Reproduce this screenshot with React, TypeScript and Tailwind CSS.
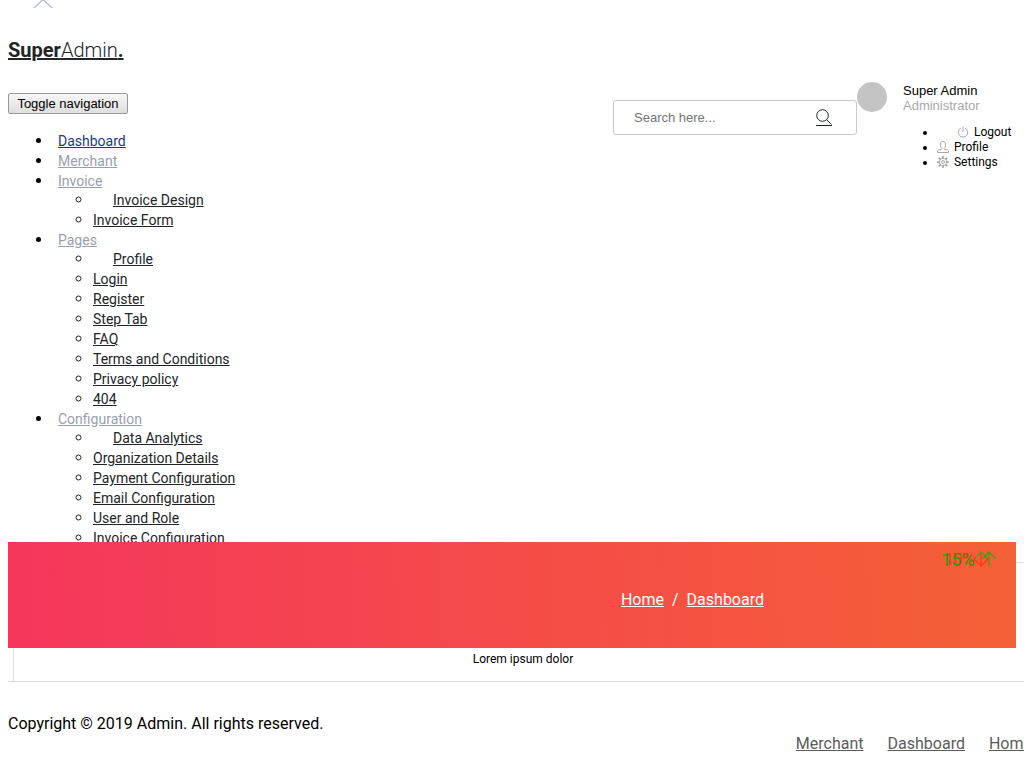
import type { ReactNode } from "react";

type MenuItem = {
  label: string;
  active?: boolean;
  children?: string[];
};

const menu: MenuItem[] = [
  { label: "Dashboard", active: true },
  { label: "Merchant" },
  { label: "Invoice", children: ["Invoice Design", "Invoice Form"] },
  {
    label: "Pages",
    children: [
      "Profile",
      "Login",
      "Register",
      "Step Tab",
      "FAQ",
      "Terms and Conditions",
      "Privacy policy",
      "404",
    ],
  },
  {
    label: "Configuration",
    children: [
      "Data Analytics",
      "Organization Details",
      "Payment Configuration",
      "Email Configuration",
      "User and Role",
      "Invoice Configuration",
    ],
  },
];

const footerLinks = ["Merchant", "Dashboard", "Home"];

function Icon({ className, children }: { className: string; children: ReactNode }) {
  return (
    <svg
      viewBox="0 0 24 24"
      fill="none"
      stroke="currentColor"
      strokeWidth="1.5"
      className={className}
      aria-hidden="true"
    >
      {children}
    </svg>
  );
}

function PowerIcon() {
  return (
    <Icon className="inline size-3 align-[-2px] text-[#8c8c8c]">
      <path d="M12 1v11M8 4a9.500 9.500 0 1 0 8 0" />
    </Icon>
  );
}

function UserIcon() {
  return (
    <Icon className="inline size-3 align-[-2px] text-[#8c8c8c]">
      <path d="M9.500 15C5 10 6 1 12 1s7 9 2.500 14c-1 3 7.500 2 8.500 5v3H1v-3c1-3 9.500-2 8.500-5z" />
    </Icon>
  );
}

function GearIcon() {
  return (
    <Icon className="inline size-3 align-[-2px] text-[#8c8c8c]">
      <circle cx="12" cy="12" r="3" />
      <circle cx="12" cy="12" r="7.500" />
      <path d="M12 0v4.500M12 19.500V24M0 12h4.500M19.500 12H24M3.500 3.500l3.200 3.200M17.300 17.300l3.200 3.200M3.500 20.500l3.200-3.200M17.300 6.700l3.200-3.200" strokeWidth="2.500" />
    </Icon>
  );
}

function SideNav() {
  return (
    <nav className="text-base leading-5">
      <ul className="list-disc pl-[45px]">
        {menu.map((item) => (
          <li key={item.label}>
            <a
              href="#"
              className={
                item.active
                  ? "pl-[5px] text-sm leading-none text-[#183b8c] underline"
                  : "pl-[5px] text-sm leading-none text-[#98a0af] underline"
              }
            >
              {item.label}
            </a>
            {item.children && (
              <ul className="-mt-px list-[circle] pl-10 text-[#212529]">
                {item.children.map((child) => (
                  <li key={child} className="first:[&>a]:pl-5">
                    <a href="#" className="text-sm leading-none underline">
                      {child}
                    </a>
                  </li>
                ))}
              </ul>
            )}
          </li>
        ))}
      </ul>
    </nav>
  );
}

function Search() {
  return (
    <form className="mt-[18px] flex h-[35px] w-[244px] items-center rounded-[3px] border border-[#c8c8c8] pr-6 pl-5">
      <input
        type="text"
        aria-label="Search"
        placeholder="Search here..."
        className="min-w-0 flex-1 font-['Liberation_Sans',sans-serif] text-[13px] outline-none placeholder:text-[#757575]"
      />
      <a href="#" aria-label="Search" className="border-b border-[#212529] text-[#212529]">
        <svg viewBox="0 0 16 16" fill="none" stroke="currentColor" className="block size-4">
          <circle cx="6.500" cy="6.500" r="5.800" />
          <path d="M10.600 10.600 15.500 15.500" />
        </svg>
      </a>
    </form>
  );
}

function Profile() {
  return (
    <div className="w-[167px]">
      <div className="flex gap-4">
        <div className="size-[30px] rounded-full bg-[#c4c4c4]" />
        <div className="pt-px font-['Liberation_Sans',sans-serif] text-[13px] leading-[15px]">
          <p>Super Admin</p>
          <p className="text-[#a8a8a8]">Administrator</p>
        </div>
      </div>
      <ul className="mt-3 list-disc pl-20 text-xs leading-[15px]">
        <li>
          <a href="#" className="pl-5">
            <PowerIcon /> <span className="pl-[2px]">Logout</span>
          </a>
        </li>
        <li>
          <a href="#">
            <UserIcon /> <span className="pl-[2px]">Profile</span>
          </a>
        </li>
        <li>
          <a href="#">
            <GearIcon /> <span className="pl-[2px]">Settings</span>
          </a>
        </li>
      </ul>
    </div>
  );
}

/* The two trend figures share one corner of the banner */
function Trends() {
  return (
    <div className="absolute top-2 right-5 h-5 w-[55px] text-lg leading-5">
      <span className="absolute left-1 text-base leading-5 text-[#fb3a10]">10%</span>
      <span className="absolute left-0 text-[#28a010]">15%</span>
      <svg
        viewBox="0 0 24 18"
        fill="none"
        className="absolute top-px right-0 h-[18px] w-6"
        aria-hidden="true"
      >
        <path d="M2 8l7-7 7 7M10 8l7-7 7 7M17 1v14" stroke="#4d9a14" strokeWidth="1.300" />
        <path d="M9 2v13M2 8l7 7 7-7" stroke="#fb3a10" strokeWidth="1.300" />
      </svg>
    </div>
  );
}

function Banner() {
  return (
    <section className="relative -mt-[6px] h-[106px] bg-[linear-gradient(87deg,#f5365c,#f56036)]">
      <nav
        aria-label="Breadcrumb"
        className="flex justify-end pt-[46px] pr-[25%] text-base leading-6 text-white"
      >
        <a href="#" className="underline">
          Home
        </a>
        <span className="px-2">/</span>
        <a href="#" className="underline">
          Dashboard
        </a>
      </nav>
      <Trends />
      <div className="absolute top-5 left-full w-2 border-t border-[#dedede]" />
    </section>
  );
}

export default function App() {
  return (
    <div className="overflow-x-hidden bg-white px-2 font-[Roboto,sans-serif] text-black">
      <header className="flex justify-between">
        <div>
          <svg
            viewBox="0 0 20 8"
            fill="none"
            stroke="#b4bbd8"
            strokeWidth="1.300"
            className="ml-[25px] h-2 w-5"
            aria-hidden="true"
          >
            <path d="M0.500 8.500 10-.5l9.500 9" />
          </svg>
          <a href="#" className="mt-7 block text-xl leading-[28px] text-[#212529] underline">
            <b>Super</b>
            <span className="font-light">Admin</span>
            <b>.</b>
          </a>
          <button
            type="button"
            className="mt-[29px] mb-[17px] block h-[21px] w-[120px] rounded-[2px] border border-[#999] bg-linear-to-b from-[#f6f6f6] to-[#dedede] font-['Liberation_Sans',sans-serif] text-[13px] leading-[19px]"
          >
            Toggle navigation
          </button>
          <SideNav />
        </div>
        <div className="-mr-2 flex items-start pt-[82px]">
          <Search />
          <Profile />
        </div>
      </header>

      <Banner />

      <div className="-mr-2 border-b border-[#dedede] pl-[5px]">
        <p className="border-l border-[#dedede] pt-1 pb-[14px] pl-2 text-center text-xs leading-[15px]">
          Lorem ipsum dolor
        </p>
      </div>

      <footer className="pt-8 pb-3 text-base leading-5">
        <p>Copyright © 2019 Admin. All rights reserved.</p>
        <nav className="-mr-4 flex justify-end gap-6 whitespace-nowrap text-[#5c5c5c]">
          {footerLinks.map((label) => (
            <a key={label} href="#" className="underline">
              {label}
            </a>
          ))}
        </nav>
      </footer>
    </div>
  );
}
